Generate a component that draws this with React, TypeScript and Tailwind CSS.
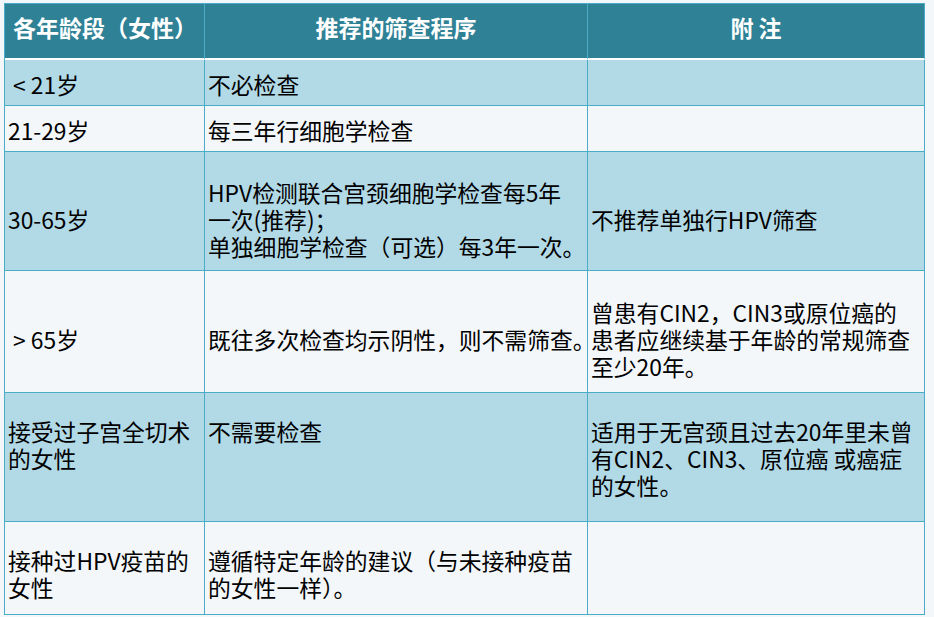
import React from "react";

const FONT = { fontFamily: '"Noto Sans CJK SC", "Noto Sans", sans-serif' };

type Row = { h: string; bg: string; pad: string; align: string; cells: string[][] };

const rows: Row[] = [
  { h: "h-[46px]", bg: "bg-[#b2d9e6]", pad: "pt-[4px]", align: "items-center", cells: [["\u00a0< 21岁"], ["不必检查"], []] },
  { h: "h-[46px]", bg: "bg-[#f3f7fa]", pad: "pt-[4px]", align: "items-center", cells: [["21-29岁"], ["每三年行细胞学检查"], []] },
  {
    h: "h-[119px]",
    bg: "bg-[#b2d9e6]",
    pad: "pt-[17px]",
    align: "items-center",
    cells: [
      ["30-65岁"],
      ["HPV检测联合宫颈细胞学检查每5年", "一次(推荐)；", "单独细胞学检查（可选）每3年一次。"],
      ["不推荐单独行HPV筛查"],
    ],
  },
  {
    h: "h-[122px]",
    bg: "bg-[#f3f7fa]",
    pad: "pt-[16px]",
    align: "items-center",
    cells: [
      ["\u00a0> 65岁"],
      ["既往多次检查均示阴性，则不需筛查。"],
      ["曾患有CIN2，CIN3或原位癌的", "患者应继续基于年龄的常规筛查", "至少20年。"],
    ],
  },
  {
    h: "h-[129px]",
    bg: "bg-[#b2d9e6]",
    pad: "pt-[25px]",
    align: "items-start",
    cells: [
      ["接受过子宫全切术", "的女性"],
      ["不需要检查"],
      ["适用于无宫颈且过去20年里未曾", "有CIN2、CIN3、原位癌 或癌症", "的女性。"],
    ],
  },
  {
    h: "h-[93px]",
    bg: "bg-[#f3f7fa]",
    pad: "pt-[12px]",
    align: "items-center",
    cells: [
      ["接种过HPV疫苗的", "女性"],
      ["遵循特定年龄的建议（与未接种疫苗", "的女性一样）。"],
      [],
    ],
  },
];

const widths = ["w-[200px]", "w-[383px]", "w-[337px]"];

export default function App() {
  return (
    <div className="w-[934px] h-[617px] bg-[#f4f7fa] overflow-hidden" style={FONT}>
      <div className="ml-[4px] pt-[3px]">
        <div className="w-[921px] border-l border-t border-[#4bacc6]">
          <div className="flex h-[56px] bg-[#2f8196]">
            <div className={`${widths[0]} flex items-center pl-[8px] pb-[8px] border-r border-[#4bacc6] border-b-2 border-b-white text-white font-bold text-[23px]`}>
              各年龄段（女性）
            </div>
            <div className={`${widths[1]} flex items-center justify-center pb-[8px] border-r border-[#4bacc6] border-b-2 border-b-white text-white font-bold text-[23px]`}>
              推荐的筛查程序
            </div>
            <div className={`${widths[2]} flex items-center justify-center pb-[8px] border-r border-[#4bacc6] border-b-2 border-b-white text-white font-bold text-[23px]`}>
              附 注
            </div>
          </div>
          {rows.map((r, i) => (
            <div key={i} className={`flex ${r.h} ${r.bg}`}>
              {r.cells.map((c, j) => (
                <div
                  key={j}
                  className={`${widths[j]} flex ${r.align} ${r.pad} pl-[3px] border-r border-b border-[#4bacc6] text-black text-[22.8px] leading-[27px]`}
                >
                  <div className="whitespace-nowrap">
                    {c.map((l, k) => (
                      <div key={k}>{l}</div>
                    ))}
                  </div>
                </div>
              ))}
            </div>
          ))}
        </div>
      </div>
    </div>
  );
}
